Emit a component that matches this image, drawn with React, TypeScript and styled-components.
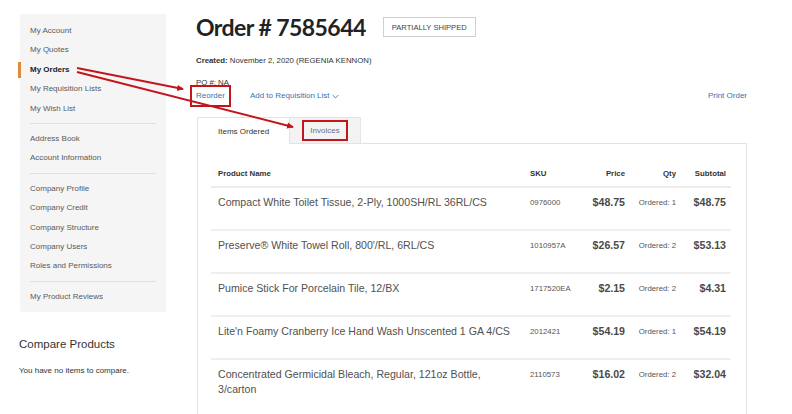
import React from 'react'
import styled, { createGlobalStyle, css } from 'styled-components'

interface OrderItem {
  name: string,
  sku: string,
  price: string,
  qty: number,
  subtotal: string,
}

const GlobalStyle = createGlobalStyle`
  html, body {
    margin: 0;
    padding: 0;
    background: #ffffff;
    overflow: hidden;
  }
  body {
    font-family: "Liberation Sans", Arial, sans-serif;
    color: #333333;
  }
`;

const RED = '#c3161c';
const LINK = '#3a73b0';

const groups: string[][] = [
  ['My Account', 'My Quotes', 'My Orders', 'My Requisition Lists', 'My Wish List'],
  ['Address Book', 'Account Information'],
  ['Company Profile', 'Company Credit', 'Company Structure', 'Company Users', 'Roles and Permissions'],
  ['My Product Reviews'],
];

const items: OrderItem[] = [
  { name: 'Compact White Toilet Tissue, 2-Ply, 1000SH/RL 36RL/CS', sku: '0976000', price: '$48.75', qty: 1, subtotal: '$48.75' },
  { name: 'Preserve® White Towel Roll, 800\'/RL, 6RL/CS', sku: '1010957A', price: '$26.57', qty: 2, subtotal: '$53.13' },
  { name: 'Pumice Stick For Porcelain Tile, 12/BX', sku: '1717520EA', price: '$2.15', qty: 2, subtotal: '$4.31' },
  { name: 'Lite\'n Foamy Cranberry Ice Hand Wash Unscented 1 GA 4/CS', sku: '2012421', price: '$54.19', qty: 1, subtotal: '$54.19' },
  { name: 'Concentrated Germicidal Bleach, Regular, 121oz Bottle, 3/carton', sku: '2110573', price: '$16.02', qty: 2, subtotal: '$32.04' },
];

const Page = styled.div`
  position: relative;
  width: 792px;
  height: 414px;
  overflow: hidden;
  display: flex;
  align-items: flex-start;
  gap: 30px;
  padding-left: 19px;
  box-sizing: border-box;
`;

const Sidebar = styled.aside`
  width: 147px;
  margin-top: 14px;
  display: flex;
  flex-direction: column;
`;

const NavPanel = styled.nav`
  margin-left: 1px;
  width: 146px;
  background: #f5f5f5;
  padding: 7px 0 6px;
  border-radius: 2px;
`;

const NavItem = styled.div<{ $active?: boolean }>`
  position: relative;
  height: 19.4px;
  line-height: 19.4px;
  padding-left: 10px;
  font-size: 8px;
  color: #595959;
  ${({ $active }) => $active && css`
    font-weight: 700;
    color: #222222;
    &::before {
      content: '';
      position: absolute;
      left: -2px;
      top: 2px;
      width: 3px;
      height: 16px;
      background: #e08a3c;
    }
  `}
`;

const NavDivider = styled.div`
  height: 1px;
  margin: 5px 10px 5px;
  background: #e0e0e0;
`;

const CompareTitle = styled.h3`
  margin: 24px 0 0;
  font-size: 11.5px;
  line-height: 16px;
  font-weight: 400;
  color: #333333;
`;

const CompareText = styled.p`
  margin: 13px 0 0;
  font-size: 8px;
  line-height: 12px;
  color: #333333;
`;

const Main = styled.main`
  width: 551px;
  margin-top: 12px;
  display: flex;
  flex-direction: column;
`;

const TitleRow = styled.div`
  display: flex;
  align-items: center;
  gap: 17px;
  height: 30px;
`;

const Title = styled.h1`
  margin: 0;
  font-family: Lato, "Open Sans", sans-serif;
  font-weight: 700;
  font-size: 23px;
  letter-spacing: -0.55px;
  line-height: 30px;
  color: #222222;
`;

const Badge = styled.span`
  display: inline-flex;
  align-items: center;
  height: 18px;
  padding: 0 8px;
  border: 1px solid #cfcfcf;
  font-size: 7.6px;
  color: #444444;
`;

const MetaLine = styled.div<{ $gap: number }>`
  margin-top: ${({ $gap }) => $gap}px;
  font-size: 7.8px;
  line-height: 12px;
  color: #333333;

  b {
    font-weight: 700;
  }
`;

const ActionRow = styled.div`
  display: flex;
  align-items: center;
  height: 14px;
  font-size: 8px;
  line-height: 14px;
`;

const Link = styled.span<{ $boxed?: boolean }>`
  color: ${LINK};
  ${({ $boxed }) => $boxed && css`
    outline: 2px solid ${RED};
    outline-offset: 1px;
    padding: 1px 3px;
    margin: 0 -3px;
  `}
`;

const Dropdown = styled(Link)`
  margin-left: 25px;
  display: inline-flex;
  align-items: center;
  gap: 2px;

  svg {
    width: 7px;
    height: 5px;
  }
`;

const PrintLink = styled(Link)`
  margin-left: auto;
`;

const Tabs = styled.div`
  margin-top: 14px;
  margin-left: 1px;
  display: flex;
  align-items: flex-end;
  height: 26px;
`;

const Tab = styled.div<{ $active?: boolean; $width: number }>`
  width: ${({ $width }) => $width}px;
  height: 26px;
  box-sizing: border-box;
  display: flex;
  align-items: center;
  font-size: 8px;
  ${({ $active }) => $active ? css`
    padding-left: 20px;
    background: #ffffff;
    border: 1px solid #e3e3e3;
    border-bottom: none;
    color: #333333;
    position: relative;
    z-index: 1;
    margin-bottom: -1px;
    height: 27px;
  ` : css`
    justify-content: center;
    background: #f3f3f3;
    border: 1px solid #e6e6e6;
    border-left: none;
    border-bottom: none;
    color: #6f6f8a;
  `}
`;

const TabLabel = styled.span<{ $boxed?: boolean }>`
  ${({ $boxed }) => $boxed && css`
    outline: 2px solid ${RED};
    outline-offset: 2px;
    padding: 2px 4px;
  `}
`;

const ContentBox = styled.section`
  margin-left: 1px;
  border: 1px solid #e3e3e3;
  border-bottom: none;
  padding: 17px 15px 0 13px;
  height: 260px;
  overflow: hidden;
`;

const Row = styled.div<{ $head?: boolean }>`
  display: grid;
  grid-template-columns: 312px 66px 43px 51px 49px;
  align-items: start;
  ${({ $head }) => $head ? css`
    height: 25px;
    align-items: center;
    border-bottom: 2px solid #ececec;
  ` : css`
    padding: 7px 0 19px;
    border-bottom: 2px solid #efefef;
  `}
`;

const HeadCell = styled.div<{ $right?: boolean; $pad?: number }>`
  font-size: 7.8px;
  font-weight: 700;
  color: #333333;
  padding: ${({ $right, $pad = 7 }) => $right ? `0 ${$pad}px 0 0` : `0 0 0 ${$pad}px`};
  text-align: ${({ $right }) => $right ? 'right' : 'left'};
`;

const NameCell = styled.div`
  padding-left: 7px;
  padding-right: 4px;
  font-size: 10.6px;
  line-height: 15px;
  color: #505050;
`;

const SmallCell = styled.div<{ $right?: boolean }>`
  font-size: 7.8px;
  line-height: 15px;
  color: #555555;
  padding: ${({ $right }) => $right ? '0 7px 0 0' : '0 0 0 7px'};
  text-align: ${({ $right }) => $right ? 'right' : 'left'};
  white-space: nowrap;
`;

const MoneyCell = styled.div<{ $pad: number }>`
  font-size: 10.6px;
  line-height: 14px;
  font-weight: 700;
  color: #4a4a4a;
  text-align: right;
  padding-right: ${({ $pad }) => $pad}px;
`;

const Arrows = styled.svg`
  position: absolute;
  top: 0;
  left: 0;
  width: 792px;
  height: 414px;
  pointer-events: none;
  z-index: 5;
`;

const ChevronDown = () => (
  <svg viewBox="0 0 10 6" fill="none" stroke={LINK} strokeWidth="1.3">
    <path d="M1 1l4 4 4-4" />
  </svg>
);

const AnnotationArrows = () => (
  <Arrows viewBox="0 0 792 414">
    <defs>
      <marker id="head" markerWidth="8" markerHeight="8" refX="6" refY="4" orient="auto" markerUnits="userSpaceOnUse">
        <path d="M0 0.8L7 4L0 7.2z" fill={RED} />
      </marker>
    </defs>
    <line x1="77" y1="68" x2="183" y2="89" stroke={RED} strokeWidth="2" markerEnd="url(#head)" />
    <line x1="77" y1="72" x2="293" y2="127" stroke={RED} strokeWidth="2" markerEnd="url(#head)" />
  </Arrows>
);

const App: React.FC = () => {
  return (
    <>
      <GlobalStyle />
      <Page>
        <Sidebar>
          <NavPanel>
            {groups.map((group, gi) => (
              <React.Fragment key={gi}>
                {gi > 0 && <NavDivider />}
                {group.map(label => (
                  <NavItem key={label} $active={label === 'My Orders'}>{label}</NavItem>
                ))}
              </React.Fragment>
            ))}
          </NavPanel>
          <CompareTitle>Compare Products</CompareTitle>
          <CompareText>You have no items to compare.</CompareText>
        </Sidebar>

        <Main>
          <TitleRow>
            <Title>Order # 7585644</Title>
            <Badge>PARTIALLY SHIPPED</Badge>
          </TitleRow>
          <MetaLine $gap={13}><b>Created:</b> November 2, 2020 (REGENIA KENNON)</MetaLine>
          <MetaLine $gap={10}>PO #: NA</MetaLine>
          <ActionRow>
            <Link $boxed>Reorder</Link>
            <Dropdown>Add to Requisition List <ChevronDown /></Dropdown>
            <PrintLink>Print Order</PrintLink>
          </ActionRow>

          <Tabs>
            <Tab $active $width={93}>Items Ordered</Tab>
            <Tab $width={71}><TabLabel $boxed>Invoices</TabLabel></Tab>
          </Tabs>
          <ContentBox>
            <Row $head>
              <HeadCell>Product Name</HeadCell>
              <HeadCell>SKU</HeadCell>
              <HeadCell $right>Price</HeadCell>
              <HeadCell $right>Qty</HeadCell>
              <HeadCell $right $pad={6}>Subtotal</HeadCell>
            </Row>
            {items.map(item => (
              <Row key={item.sku}>
                <NameCell>{item.name}</NameCell>
                <SmallCell>{item.sku}</SmallCell>
                <MoneyCell $pad={7}>{item.price}</MoneyCell>
                <SmallCell $right>Ordered: {item.qty}</SmallCell>
                <MoneyCell $pad={6}>{item.subtotal}</MoneyCell>
              </Row>
            ))}
          </ContentBox>
        </Main>
        <AnnotationArrows />
      </Page>
    </>
  )
}

export default App;
